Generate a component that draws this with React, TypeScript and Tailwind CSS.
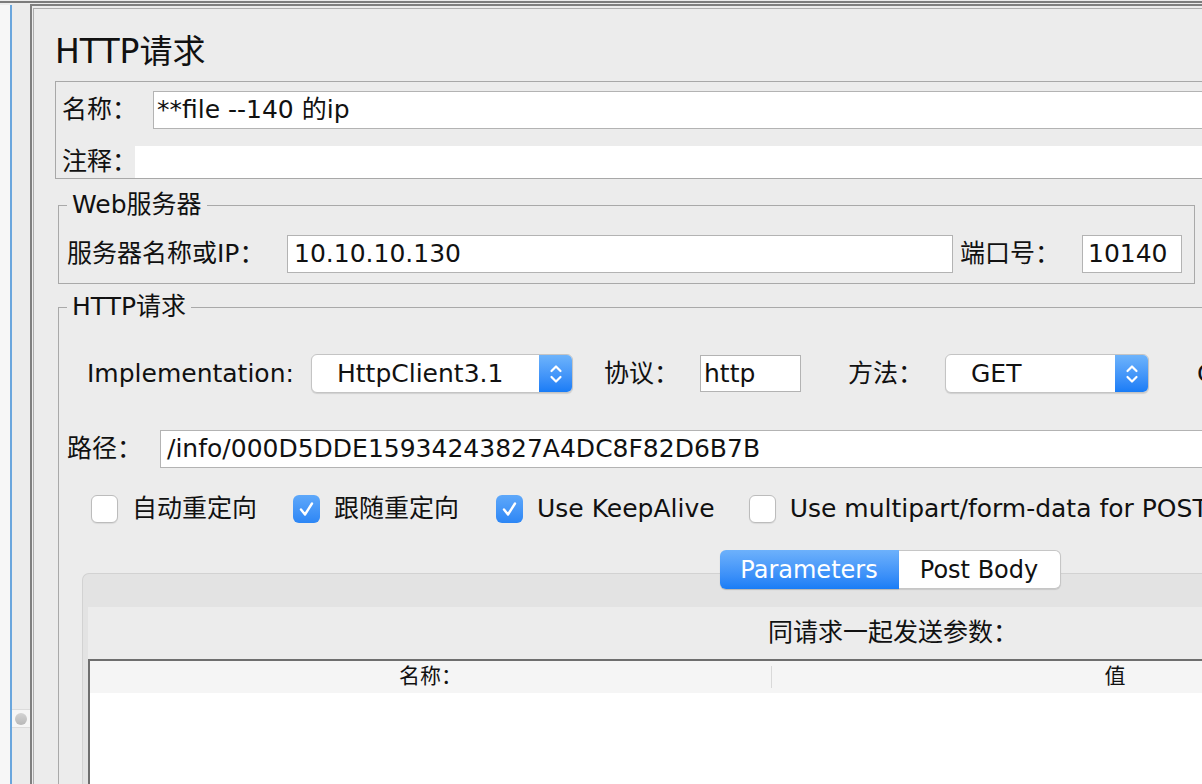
import React from 'react';

// stepper arrows drawn inside the blue end of a popup button
const Chevrons = () => (
  <svg width="14" height="24" viewBox="0 0 14 24" fill="none" stroke="white" strokeWidth="2.2" strokeLinecap="round" strokeLinejoin="round">
    <path d="M2.5 9 L7 4.5 L11.5 9" />
    <path d="M2.5 15 L7 19.5 L11.5 15" />
  </svg>
);

const Select = ({ value, className }: { value: string; className: string }) => (
  <div className={`flex h-[39px] shrink-0 overflow-hidden rounded-[6px] border border-[#c4c4c4] bg-white shadow-[0_1px_1px_rgba(0,0,0,0.12)] ${className}`}>
    <div className="flex flex-1 items-center pl-[25px]">{value}</div>
    <div className="flex w-[33px] items-center justify-center bg-gradient-to-b from-[#6db3fb] to-[#187cf6]">
      <Chevrons />
    </div>
  </div>
);

const CheckBox = ({ on }: { on: boolean }) =>
  on ? (
    <div className="flex h-[28px] w-[27px] shrink-0 items-center justify-center rounded-[6px] bg-gradient-to-b from-[#5ea8fa] to-[#2c86f5]">
      <svg width="27" height="28" viewBox="0 0 27 28" fill="none" stroke="white" strokeWidth="2.4" strokeLinecap="round" strokeLinejoin="round">
        <path d="M8 14.5 L12 19.5 L19 8.5" />
      </svg>
    </div>
  ) : (
    <div className="h-[28px] w-[27px] shrink-0 rounded-[6px] border border-[#bcbcbc] bg-white shadow-[0_1px_1px_rgba(0,0,0,0.08)]" />
  );

const Option = ({ on, label, className }: { on: boolean; label: string; className: string }) => (
  <div className={`flex shrink-0 items-center gap-[14px] ${className}`}>
    <CheckBox on={on} />
    <span className="whitespace-nowrap">{label}</span>
  </div>
);

const App = () => {
  return (
    <div className="flex h-[784px] w-[1202px] flex-col overflow-hidden bg-[#ececec] pt-[1px] font-['DejaVu_Sans','Noto_Sans_CJK_SC',sans-serif] text-[25px] text-[#111]">
      <div className="h-[2px] shrink-0 bg-[#7c7c7c]" />
      <div className="flex min-h-0 flex-1">
        {/* tree side, mostly cut off */}
        <div className="flex w-[30px] shrink-0">
          <div className="mt-[2px] w-[10px] bg-[#f7f7f7]" />
          <div className="mt-[2px] w-[2px] bg-[#6aa6dd]" />
          <div className="flex flex-1 flex-col">
            <div className="mt-[706px] flex h-[19px] items-center justify-center border-y border-[#dcdcdc] bg-[#f6f6f6]">
              <div className="h-[12px] w-[12px] rounded-full bg-gradient-to-b from-[#d4d4d4] to-[#b8b8b8]" />
            </div>
          </div>
        </div>

        {/* sampler panel */}
        <div className="mt-[1px] flex min-w-0 flex-1 flex-col overflow-hidden border-l-2 border-t-2 border-[#7f7f7f]">
          <div className="ml-[1px] mt-[2px] flex-1 border-l border-t border-[#adadad] pl-[21px]">
            <div className="mt-[25px] h-[36px] text-[33px] leading-[36px]">HTTP请求</div>

            <div className="mt-[11px] w-[1400px] border border-[#a8a8a8] pt-[9px]">
              <div className="flex h-[38px] items-center pl-[6px]">
                <span className="w-[91px] shrink-0 whitespace-nowrap">名称：</span>
                <div className="flex h-[38px] flex-1 items-center border border-[#b3b3b3] bg-white pl-[3px]">**file --140 的ip</div>
              </div>
              <div className="mt-[17px] flex h-[32px] items-center pl-[6px]">
                <span className="w-[73px] shrink-0 whitespace-nowrap">注释：</span>
                <div className="h-full flex-1 bg-white" />
              </div>
            </div>

            <fieldset className="ml-[3px] mt-[11px] w-[1137px] border border-[#a9a9a9] pb-[10px] pl-[8px] pr-[11px]">
              <legend className="px-[5px] leading-[30px]">Web服务器</legend>
              <div className="mt-[15px] flex items-center">
                <span className="w-[220px] shrink-0 whitespace-nowrap">服务器名称或IP：</span>
                <div className="flex h-[38px] w-[666px] shrink-0 items-center border border-[#b3b3b3] bg-white pl-[6px]">10.10.10.130</div>
                <span className="ml-[7px] w-[122px] shrink-0 whitespace-nowrap">端口号：</span>
                <div className="flex h-[38px] w-[100px] shrink-0 items-center border border-[#b3b3b3] bg-white pl-[5px]">10140</div>
              </div>
            </fieldset>

            <fieldset className="ml-[3px] mt-[8px] h-[640px] w-[1400px] border border-[#a9a9a9]">
              <legend className="ml-[8px] px-[5px] leading-[30px]">HTTP请求</legend>

              <div className="mt-[32px] flex h-[39px] items-center pl-[28px]">
                <span className="w-[224px] shrink-0 whitespace-nowrap">Implementation:</span>
                <Select value="HttpClient3.1" className="w-[262px]" />
                <span className="ml-[31px] w-[96px] shrink-0 whitespace-nowrap">协议：</span>
                <div className="flex h-[37px] w-[101px] shrink-0 items-center border border-[#b3b3b3] bg-white pl-[3px]">http</div>
                <span className="ml-[47px] w-[97px] shrink-0 whitespace-nowrap">方法：</span>
                <Select value="GET" className="w-[204px]" />
                <span className="ml-[48px] whitespace-nowrap">Content encoding:</span>
              </div>

              <div className="mt-[37px] flex h-[38px] items-center pl-[8px]">
                <span className="w-[93px] shrink-0 whitespace-nowrap">路径：</span>
                <div className="flex h-[38px] flex-1 items-center border border-[#b3b3b3] bg-white pl-[6px]">/info/000D5DDE15934243827A4DC8F82D6B7B</div>
              </div>

              <div className="mt-[27px] flex h-[28px] items-center pl-[32px]">
                <Option on={false} label="自动重定向" className="" />
                <Option on={true} label="跟随重定向" className="ml-[36px]" />
                <Option on={true} label="Use KeepAlive" className="ml-[37px]" />
                <Option on={false} label="Use multipart/form-data for POST" className="ml-[34px]" />
              </div>

              <div className="ml-[23px] mt-[27px] flex w-[1616px] flex-col">
                <div className="relative z-10 flex h-[39px] justify-center text-[24px]">
                  <div className="flex w-[179px] items-center justify-center rounded-l-[6px] bg-gradient-to-b from-[#6db1fb] to-[#197df6] text-white shadow-[0_1px_1px_rgba(0,0,0,0.2)]">Parameters</div>
                  <div className="flex w-[162px] items-center justify-center rounded-r-[6px] border border-l-0 border-[#c6c6c6] bg-white shadow-[0_1px_1px_rgba(0,0,0,0.12)]">Post Body</div>
                </div>
                <div className="-mt-[16px] rounded-tl-[7px] border-l border-t border-[#d2d2d2] bg-[#e3e3e3] pl-[5px] pt-[33px]">
                  <div className="flex flex-col bg-[#ececec]">
                    <div className="flex h-[52px] items-center justify-center">同请求一起发送参数：</div>
                    <div className="border-l-2 border-t-2 border-[#6e6e6e] bg-white">
                      <div className="flex h-[32px] items-center bg-[#f5f5f5] text-[21px]">
                        <div className="w-[681px] text-center">名称：</div>
                        <div className="h-[22px] w-px bg-[#d9d9d9]" />
                        <div className="w-[686px] text-center">值</div>
                      </div>
                      <div className="h-[200px]" />
                    </div>
                  </div>
                </div>
              </div>
            </fieldset>
          </div>
        </div>
      </div>
    </div>
  );
};

export default App;
